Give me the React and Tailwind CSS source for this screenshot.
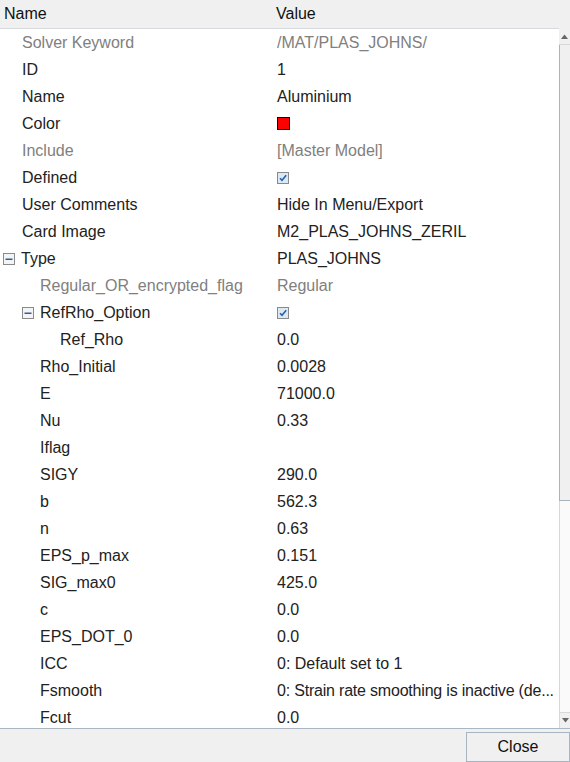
import React from "react";

const rows = [
  { name: "Solver Keyword", value: "/MAT/PLAS_JOHNS/", level: 0, gray: true },
  { name: "ID", value: "1", level: 0 },
  { name: "Name", value: "Aluminium", level: 0 },
  { name: "Color", value: "", level: 0, swatch: true },
  { name: "Include", value: "[Master Model]", level: 0, gray: true },
  { name: "Defined", value: "", level: 0, check: true },
  { name: "User Comments", value: "Hide In Menu/Export", level: 0 },
  { name: "Card Image", value: "M2_PLAS_JOHNS_ZERIL", level: 0 },
  { name: "Type", value: "PLAS_JOHNS", level: 0, toggle: true },
  { name: "Regular_OR_encrypted_flag", value: "Regular", level: 1, gray: true },
  { name: "RefRho_Option", value: "", level: 1, toggle: true, check: true },
  { name: "Ref_Rho", value: "0.0", level: 2 },
  { name: "Rho_Initial", value: "0.0028", level: 1 },
  { name: "E", value: "71000.0", level: 1 },
  { name: "Nu", value: "0.33", level: 1 },
  { name: "Iflag", value: "", level: 1 },
  { name: "SIGY", value: "290.0", level: 1 },
  { name: "b", value: "562.3", level: 1 },
  { name: "n", value: "0.63", level: 1 },
  { name: "EPS_p_max", value: "0.151", level: 1 },
  { name: "SIG_max0", value: "425.0", level: 1 },
  { name: "c", value: "0.0", level: 1 },
  { name: "EPS_DOT_0", value: "0.0", level: 1 },
  { name: "ICC", value: "0: Default set to 1", level: 1 },
  { name: "Fsmooth", value: "0: Strain rate smoothing is inactive (de...", level: 1, tight: true },
  { name: "Fcut", value: "0.0", level: 1 },
];

function MinusBox() {
  return (
    <svg width="12" height="12" viewBox="0 0 12 12" className="shrink-0">
      <rect x="0.5" y="0.5" width="11" height="11" fill="#f4f4f4" stroke="#8a8a8a" />
      <rect x="2.5" y="5.5" width="7" height="1.5" fill="#2d5fa0" />
    </svg>
  );
}

function CheckBox() {
  return (
    <svg width="12" height="12" viewBox="0 0 12 12">
      <rect x="0.5" y="0.5" width="11" height="11" fill="#dde8f2" stroke="#8a8a8a" />
      <path d="M3 6.2 L5 8.3 L9.2 3.2" fill="none" stroke="#1f64b0" strokeWidth="1.6" />
    </svg>
  );
}

function Swatch() {
  return <div className="w-[13px] h-[13px] bg-[#ff0000] border border-black" />;
}

const pad = ["pl-[22px]", "pl-[40px]", "pl-[60px]"];
const padToggle = ["pl-[3px]", "pl-[22px]", "pl-[41px]"];

export default function App() {
  return (
    <div
      className="w-[570px] h-[762px] flex flex-col bg-[#f0f0f0] text-[16px] text-[#222] overflow-hidden"
      style={{ fontFamily: '"Liberation Sans", Arial, sans-serif' }}
    >
      {/* header */}
      <div className="h-[29px] flex shrink-0">
        <div className="flex-1 flex border-b border-[#d6dade] bg-[#f0f0f0] text-[#111]">
          <div className="w-[272px] pl-[4px] flex items-center">Name</div>
          <div className="flex-1 pl-[4px] flex items-center">Value</div>
        </div>
        <div className="w-[11px]" />
      </div>
      {/* body */}
      <div className="h-[699px] flex shrink-0">
        <div className="flex-1 bg-white overflow-hidden">
          {rows.map((r, i) => (
            <div key={i} className="h-[27px] flex">
              <div
                className={
                  "w-[272px] flex items-center gap-[6px] " +
                  (r.toggle ? padToggle[r.level] : pad[r.level]) +
                  (r.gray ? " text-[#808080]" : "")
                }
              >
                {r.toggle && <MinusBox />}
                <span className="whitespace-nowrap">{r.name}</span>
              </div>
              <div
                className={
                  "flex-1 min-w-0 pl-[5px] flex items-center whitespace-nowrap overflow-hidden" +
                  (r.gray ? " text-[#808080]" : "") +
                  (r.tight ? " tracking-[-0.2px]" : "")
                }
              >
                {r.swatch && <Swatch />}
                {r.check && <CheckBox />}
                {r.value}
              </div>
            </div>
          ))}
        </div>
        {/* scrollbar */}
        <div className="w-[11px] flex flex-col">
          <div className="h-[16px] bg-[#f0f0f0] border-b border-[#d8d8d8] flex items-center justify-center">
            <svg width="7" height="5" viewBox="0 0 7 5">
              <path d="M0 5 L3.5 0.5 L7 5 Z" fill="#666" />
            </svg>
          </div>
          <div className="h-[456px] bg-[#f0f0f0] border-l border-b border-[#aab2ba]" />
          <div className="flex-1 bg-[#fafafa] border-l border-[#d8d8d8]" />
          <div className="h-[16px] bg-[#f0f0f0] border-t border-l border-[#d8d8d8] flex items-center justify-center">
            <svg width="7" height="5" viewBox="0 0 7 5">
              <path d="M0 0 L3.5 4.5 L7 0 Z" fill="#666" />
            </svg>
          </div>
        </div>
      </div>
      {/* footer */}
      <div className="flex-1 border-t border-[#aab6c2] flex justify-end items-end">
        <button className="w-[104px] h-[30px] border border-[#a8b4c0] bg-[#f0f0f0] text-[16px] text-[#111] flex items-center justify-center">
          Close
        </button>
      </div>
    </div>
  );
}
